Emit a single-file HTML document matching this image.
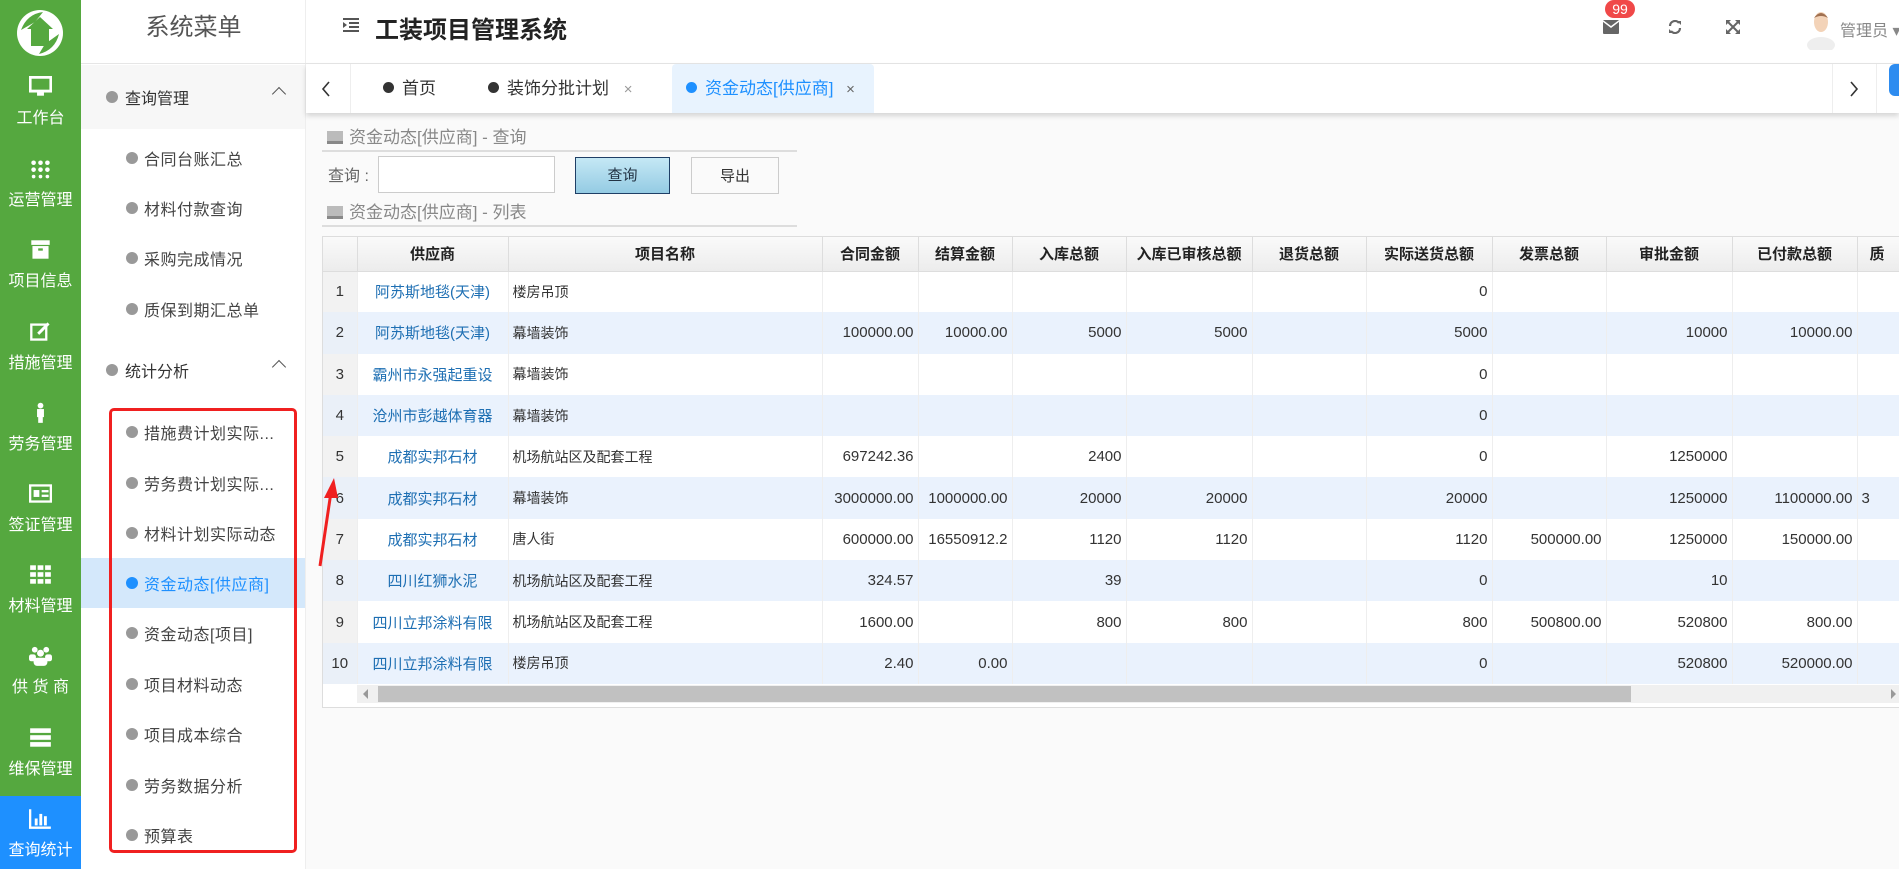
<!DOCTYPE html>
<html><head><meta charset="utf-8">
<style>
*{box-sizing:border-box;margin:0;padding:0}
body{width:1899px;height:869px;overflow:hidden;position:relative;background:#fafafa;font-family:"Liberation Sans","Noto Sans CJK SC",sans-serif;color:#333}
.abs{position:absolute}
#side{left:0;top:0;width:81px;height:869px;background:#55a83f}
.si{position:absolute;left:0;width:81px;height:81px;color:#fff;text-align:center;font-size:16px}
.si .ic{position:absolute;left:29px;top:12px;width:23px;height:21px}
.si .tx{position:absolute;left:0;width:81px;top:40px}
#menu{left:81px;top:0;width:225px;height:869px;background:#fff;border-right:1px solid #eee}
.mh{position:absolute;left:0;top:0;width:225px;height:64px;border-bottom:1px solid #e6e6e6;text-align:center;line-height:56px;font-size:24px;color:#555}
.grp{position:absolute;left:0;width:224px;height:64px;font-size:16px;color:#333}
.grp .d{position:absolute;left:25px;top:26px;width:12px;height:12px;border-radius:50%;background:#999}
.grp .t{position:absolute;left:44px;top:20px}
.grp .c{position:absolute;left:193px;top:24px;width:10px;height:10px;border-left:1.5px solid #555;border-top:1.5px solid #555;transform:rotate(45deg)}
.it{position:absolute;left:0;width:224px;height:50px;font-size:16px;color:#444}
.it .d{position:absolute;left:45px;top:19px;width:12px;height:12px;border-radius:50%;background:#999}
.it .t{position:absolute;left:63px;top:13px;letter-spacing:0.5px}
#hdr{left:306px;top:0;width:1593px;height:64px;background:#fff;border-bottom:1px solid #e6e6e6}
#tabs{left:306px;top:64px;width:1593px;height:49px;background:#fff;box-shadow:0 3px 5px rgba(0,0,0,.15)}
.tab{position:absolute;top:0;height:49px;line-height:49px;font-size:17px;color:#333}
.tab .dot{display:inline-block;width:11px;height:11px;border-radius:50%;background:#333;margin-right:8px;vertical-align:1px}
.ptitle{position:absolute;left:327px;font-size:17px;color:#888}
.ptitle i{display:inline-block;width:16px;height:13px;background:#bbb;margin-right:6px;vertical-align:-1px;border-bottom:3px solid #888}
.hl{position:absolute;left:322px;width:475px;height:2px;background:#ddd}
#tw{left:322px;top:236px;width:1577px;height:472px;border:1px solid #ddd;border-right:none;overflow:hidden;background:#fff}
table{border-collapse:collapse;table-layout:fixed;width:1700px;font-size:15px}
th{height:34px;background:linear-gradient(#fafafa,#ececec);border-right:1px solid #ddd;border-bottom:1px solid #ddd;font-weight:bold;color:#222;font-size:15px}
td{height:41.3px;border-right:1px solid #eee;padding:0 4px;color:#333;white-space:nowrap;overflow:hidden}
td.n{background:#f2f2f2;text-align:center;font-size:15px}
td.s{color:#1e6fb3;text-align:center;padding:0 2px}
td.p{font-size:14px}
td.r{text-align:right}
tr.e td{background:#eaf2fd}
tr.e td.n{background:#eaf0f8}
</style></head><body>

<div id="side" class="abs">
  <svg class="abs" style="left:15px;top:8px" width="50" height="50" viewBox="0 0 50 50"><circle cx="25" cy="25" r="23" fill="#fff"/><path d="M25 9 L38 21 L34 21 L34 38 L16 38 L16 21 L12 21 Z" fill="#55a83f"/><path d="M6 22 Q12 6 28 4 L20 14 Z M44 26 Q40 42 24 46 L30 36 Z" fill="#55a83f"/></svg>
  <div class="si" style="top:64px"><svg class="ic" viewBox="0 0 20 18"><rect x="1" y="1" width="18" height="12" fill="none" stroke="#fff" stroke-width="2.5"/><rect x="7" y="14" width="6" height="3" fill="#fff"/></svg><div class="tx">工作台</div></div>
  <div class="si" style="top:146px"><svg class="ic" viewBox="0 0 20 18"><g fill="#fff"><circle cx="4" cy="4" r="2"/><circle cx="10" cy="4" r="2"/><circle cx="16" cy="4" r="2"/><circle cx="4" cy="10" r="2"/><circle cx="10" cy="10" r="2"/><circle cx="16" cy="10" r="2"/><circle cx="4" cy="16" r="1.6"/><circle cx="10" cy="16" r="1.6"/><circle cx="16" cy="16" r="1.6"/></g></svg><div class="tx">运营管理</div></div>
  <div class="si" style="top:227px"><svg class="ic" viewBox="0 0 20 18"><rect x="2" y="1" width="16" height="4" fill="#fff"/><rect x="3" y="6" width="14" height="11" fill="#fff"/><rect x="8" y="8" width="4" height="2" fill="#55a83f"/></svg><div class="tx">项目信息</div></div>
  <div class="si" style="top:309px"><svg class="ic" viewBox="0 0 20 18"><rect x="2" y="3" width="13" height="13" fill="none" stroke="#fff" stroke-width="2"/><path d="M8 11 L17 2" stroke="#fff" stroke-width="2.5"/></svg><div class="tx">措施管理</div></div>
  <div class="si" style="top:390px"><svg class="ic" viewBox="0 0 20 18"><circle cx="10" cy="3" r="2.5" fill="#fff"/><rect x="7" y="6" width="6" height="7" fill="#fff"/><rect x="8" y="12" width="4" height="6" fill="#fff"/></svg><div class="tx">劳务管理</div></div>
  <div class="si" style="top:471px"><svg class="ic" viewBox="0 0 20 18"><rect x="1" y="2" width="18" height="14" fill="none" stroke="#fff" stroke-width="2"/><rect x="4" y="6" width="5" height="6" fill="#fff"/><rect x="11" y="6" width="6" height="2" fill="#fff"/><rect x="11" y="10" width="6" height="2" fill="#fff"/></svg><div class="tx">签证管理</div></div>
  <div class="si" style="top:552px"><svg class="ic" viewBox="0 0 20 18"><g fill="#fff"><rect x="1" y="1" width="5" height="4"/><rect x="7.5" y="1" width="5" height="4"/><rect x="14" y="1" width="5" height="4"/><rect x="1" y="7" width="5" height="4"/><rect x="7.5" y="7" width="5" height="4"/><rect x="14" y="7" width="5" height="4"/><rect x="1" y="13" width="5" height="4"/><rect x="7.5" y="13" width="5" height="4"/><rect x="14" y="13" width="5" height="4"/></g></svg><div class="tx">材料管理</div></div>
  <div class="si" style="top:633px"><svg class="ic" viewBox="0 0 20 18"><g fill="#fff"><circle cx="5" cy="4" r="2.5"/><circle cx="15" cy="4" r="2.5"/><circle cx="10" cy="7" r="3"/><rect x="4" y="11" width="12" height="7" rx="3"/><rect x="0" y="8" width="6" height="6" rx="2"/><rect x="14" y="8" width="6" height="6" rx="2"/></g></svg><div class="tx">供 货 商</div></div>
  <div class="si" style="top:715px"><svg class="ic" viewBox="0 0 20 18"><g fill="#fff"><rect x="1" y="1" width="18" height="4"/><rect x="1" y="7" width="18" height="4"/><rect x="1" y="13" width="18" height="4"/></g></svg><div class="tx">维保管理</div></div>
  <div class="si" style="top:796px;height:73px;background:#1e90ff"><svg class="ic" viewBox="0 0 20 18"><path d="M1 1 V17 H19" stroke="#fff" stroke-width="2" fill="none"/><g fill="#fff"><rect x="5" y="9" width="2.5" height="6"/><rect x="9" y="5" width="2.5" height="10"/><rect x="13" y="7" width="2.5" height="8"/></g></svg><div class="tx">查询统计</div></div>
</div>

<div id="menu" class="abs">
  <div class="mh">系统菜单</div>
  <div class="grp" style="top:65px;background:#f7f7f7"><span class="d"></span><span class="t">查询管理</span><span class="c"></span></div>
  <div class="it" style="top:133px"><span class="d"></span><span class="t">合同台账汇总</span></div>
  <div class="it" style="top:183px"><span class="d"></span><span class="t">材料付款查询</span></div>
  <div class="it" style="top:233px"><span class="d"></span><span class="t">采购完成情况</span></div>
  <div class="it" style="top:284px"><span class="d"></span><span class="t">质保到期汇总单</span></div>
  <div class="grp" style="top:338px"><span class="d"></span><span class="t">统计分析</span><span class="c"></span></div>
  <div class="it" style="top:407px"><span class="d"></span><span class="t">措施费计划实际...</span></div>
  <div class="it" style="top:458px"><span class="d"></span><span class="t">劳务费计划实际...</span></div>
  <div class="it" style="top:508px"><span class="d"></span><span class="t">材料计划实际动态</span></div>
  <div class="it" style="top:558px;background:#d4e8fb;color:#1e90ff"><span class="d" style="background:#1e90ff"></span><span class="t">资金动态[供应商]</span></div>
  <div class="it" style="top:608px"><span class="d"></span><span class="t">资金动态[项目]</span></div>
  <div class="it" style="top:659px"><span class="d"></span><span class="t">项目材料动态</span></div>
  <div class="it" style="top:709px"><span class="d"></span><span class="t">项目成本综合</span></div>
  <div class="it" style="top:760px"><span class="d"></span><span class="t">劳务数据分析</span></div>
  <div class="it" style="top:810px"><span class="d"></span><span class="t">预算表</span></div>
  <div class="abs" style="left:28px;top:408px;width:188px;height:445px;border:3px solid #f02020;border-radius:5px"></div>
</div>

<div id="hdr" class="abs">
  <svg class="abs" style="left:37px;top:18px" width="16" height="14" viewBox="0 0 16 14"><g fill="#555"><rect x="0" y="0" width="16" height="2"/><rect x="6" y="4" width="10" height="2"/><rect x="6" y="8" width="10" height="2"/><rect x="0" y="12" width="16" height="2"/><path d="M0 4 L4 7 L0 10Z"/></g></svg>
  <div class="abs" style="left:69px;top:10px;font-size:24px;font-weight:bold;color:#222">工装项目管理系统</div>
  <div class="abs" style="left:1299px;top:0;width:30px;height:18px;border-radius:9px;background:#f04848;color:#fff;font-size:14px;text-align:center;line-height:18px">99</div>
  <svg class="abs" style="left:1297px;top:20px" width="16" height="14" viewBox="0 0 16 14"><rect x="0" y="0" width="16" height="14" rx="1" fill="#666"/><path d="M0 1 L8 7 L16 1" stroke="#fff" stroke-width="1.5" fill="none"/></svg>
  <svg class="abs" style="left:1362px;top:20px" width="14" height="14" viewBox="0 0 14 14"><path d="M2 6 A5 5 0 0 1 11 3 M12 8 A5 5 0 0 1 3 11" stroke="#666" stroke-width="2.2" fill="none"/><path d="M9 1 L13 1 L13 5Z M5 13 L1 13 L1 9Z" fill="#666"/></svg>
  <svg class="abs" style="left:1420px;top:20px" width="14" height="14" viewBox="0 0 14 14"><path d="M1 1 L13 13 M13 1 L1 13" stroke="#666" stroke-width="2"/><path d="M0 0 H5 L0 5Z M14 0 V5 L9 0Z M0 14 V9 L5 14Z M14 14 H9 L14 9Z" fill="#666"/></svg>
  <svg class="abs" style="left:1500px;top:8px" width="30" height="42" viewBox="0 0 30 42"><ellipse cx="15" cy="37" rx="14" ry="8" fill="#eee"/><ellipse cx="15" cy="14" rx="7" ry="10" fill="#f3d3b8"/><path d="M8 10 Q15 0 22 10 Q15 6 8 10Z" fill="#a07050"/></svg>
  <div class="abs" style="left:1534px;top:17px;font-size:16px;color:#888;white-space:nowrap">管理员 ▾</div>
</div>

<div id="tabs" class="abs">
  <div class="abs" style="left:0;top:0;width:45px;height:49px;border-right:1px solid #eee"></div>
  <svg class="abs" style="left:15px;top:17px" width="10" height="16" viewBox="0 0 10 16"><path d="M8 1 L2 8 L8 15" stroke="#333" stroke-width="1.6" fill="none"/></svg>
  <div class="tab" style="left:77px"><span class="dot"></span>首页</div>
  <div class="tab" style="left:182px"><span class="dot"></span>装饰分批计划 <span style="color:#999;margin-left:10px;font-size:15px">×</span></div>
  <div class="tab" style="left:366px;width:202px;background:#e8f3fe;color:#1e90ff;padding-left:14px;border-radius:4px 4px 0 0"><span class="dot" style="background:#1e90ff"></span>资金动态[供应商] <span style="color:#666;margin-left:8px;font-size:15px">×</span></div>
  <div class="abs" style="left:1526px;top:0;width:45px;height:49px;border-left:1px solid #eee;border-right:1px solid #eee"></div>
  <svg class="abs" style="left:1543px;top:17px" width="10" height="16" viewBox="0 0 10 16"><path d="M2 1 L8 8 L2 15" stroke="#333" stroke-width="1.6" fill="none"/></svg>
  <div class="abs" style="left:1583px;top:0;width:14px;height:32px;background:#2d8cf0;border-radius:6px 0 0 6px"></div>
</div>

<div class="ptitle" style="top:123px"><i></i>资金动态[供应商] - 查询</div>
<div class="hl" style="top:150px"></div>
<div class="abs" style="left:328px;top:162px;font-size:16px;color:#666">查询 :</div>
<div class="abs" style="left:378px;top:156px;width:177px;height:37px;border:1px solid #ccc;background:#fff"></div>
<div class="abs" style="left:575px;top:157px;width:95px;height:37px;border:1px solid #1f3f66;background:linear-gradient(#c5e8f5,#94cbe3);text-align:center;line-height:35px;font-size:15px;color:#234">查询</div>
<div class="abs" style="left:691px;top:157px;width:88px;height:37px;border:1px solid #ccc;background:#fafafa;text-align:center;line-height:37px;font-size:15px;color:#333">导出</div>
<div class="ptitle" style="top:198px"><i></i>资金动态[供应商] - 列表</div>
<div class="hl" style="top:225px"></div>

<div id="tw" class="abs">
<table>
<colgroup><col style="width:34px"><col style="width:151px"><col style="width:314px"><col style="width:96px"><col style="width:94px"><col style="width:114px"><col style="width:126px"><col style="width:114px"><col style="width:126px"><col style="width:114px"><col style="width:126px"><col style="width:125px"><col style="width:166px"></colgroup>
<tr><th></th><th>供应商</th><th>项目名称</th><th>合同金额</th><th>结算金额</th><th>入库总额</th><th>入库已审核总额</th><th>退货总额</th><th>实际送货总额</th><th>发票总额</th><th>审批金额</th><th>已付款总额</th><th style="text-align:left;padding-left:12px">质</th></tr>
<tr><td class="n">1</td><td class="s">阿苏斯地毯(天津)</td><td class="p">楼房吊顶</td><td></td><td></td><td></td><td></td><td></td><td class="r">0</td><td></td><td></td><td></td><td></td></tr>
<tr class="e"><td class="n">2</td><td class="s">阿苏斯地毯(天津)</td><td class="p">幕墙装饰</td><td class="r">100000.00</td><td class="r">10000.00</td><td class="r">5000</td><td class="r">5000</td><td></td><td class="r">5000</td><td></td><td class="r">10000</td><td class="r">10000.00</td><td></td></tr>
<tr><td class="n">3</td><td class="s">霸州市永强起重设</td><td class="p">幕墙装饰</td><td></td><td></td><td></td><td></td><td></td><td class="r">0</td><td></td><td></td><td></td><td></td></tr>
<tr class="e"><td class="n">4</td><td class="s">沧州市彭越体育器</td><td class="p">幕墙装饰</td><td></td><td></td><td></td><td></td><td></td><td class="r">0</td><td></td><td></td><td></td><td></td></tr>
<tr><td class="n">5</td><td class="s">成都实邦石材</td><td class="p">机场航站区及配套工程</td><td class="r">697242.36</td><td></td><td class="r">2400</td><td></td><td></td><td class="r">0</td><td></td><td class="r">1250000</td><td></td><td></td></tr>
<tr class="e"><td class="n">6</td><td class="s">成都实邦石材</td><td class="p">幕墙装饰</td><td class="r">3000000.00</td><td class="r">1000000.00</td><td class="r">20000</td><td class="r">20000</td><td></td><td class="r">20000</td><td></td><td class="r">1250000</td><td class="r">1100000.00</td><td>3</td></tr>
<tr><td class="n">7</td><td class="s">成都实邦石材</td><td class="p">唐人街</td><td class="r">600000.00</td><td class="r">16550912.2</td><td class="r">1120</td><td class="r">1120</td><td></td><td class="r">1120</td><td class="r">500000.00</td><td class="r">1250000</td><td class="r">150000.00</td><td></td></tr>
<tr class="e"><td class="n">8</td><td class="s">四川红狮水泥</td><td class="p">机场航站区及配套工程</td><td class="r">324.57</td><td></td><td class="r">39</td><td></td><td></td><td class="r">0</td><td></td><td class="r">10</td><td></td><td></td></tr>
<tr><td class="n">9</td><td class="s">四川立邦涂料有限</td><td class="p">机场航站区及配套工程</td><td class="r">1600.00</td><td></td><td class="r">800</td><td class="r">800</td><td></td><td class="r">800</td><td class="r">500800.00</td><td class="r">520800</td><td class="r">800.00</td><td></td></tr>
<tr class="e"><td class="n">10</td><td class="s">四川立邦涂料有限</td><td class="p">楼房吊顶</td><td class="r">2.40</td><td class="r">0.00</td><td></td><td></td><td></td><td class="r">0</td><td></td><td class="r">520800</td><td class="r">520000.00</td><td></td></tr>
</table>
<div class="abs" style="left:34px;top:448px;width:1543px;height:18px;background:#f0f0f0"></div>
<div class="abs" style="left:55px;top:449px;width:1253px;height:16px;background:#c1c1c1"></div>
<div class="abs" style="left:40px;top:452px;width:0;height:0;border-top:5px solid transparent;border-bottom:5px solid transparent;border-right:5px solid #999"></div>
<div class="abs" style="left:1568px;top:452px;width:0;height:0;border-top:5px solid transparent;border-bottom:5px solid transparent;border-left:5px solid #999"></div>
</div>

<svg class="abs" style="left:310px;top:470px" width="30" height="100" viewBox="0 0 30 100"><path d="M10 96 L21 22" stroke="#f02020" stroke-width="3"/><path d="M24 8 L14 28 L28 28 Z" fill="#f02020"/></svg>
</body></html>
